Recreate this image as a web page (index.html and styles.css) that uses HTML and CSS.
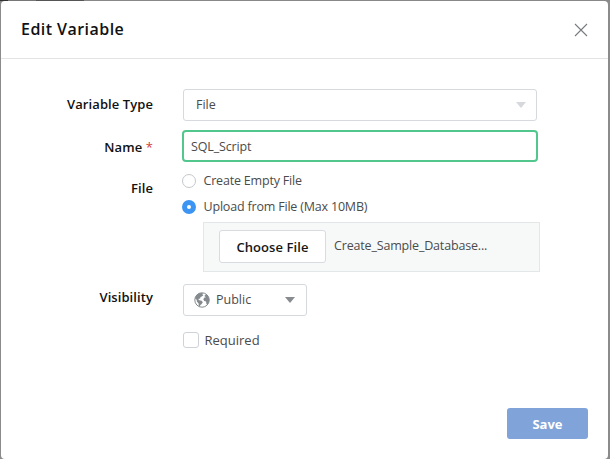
FILE: index.html
```html
<!DOCTYPE html>
<html lang="en">
<head>
<meta charset="utf-8">
<title>Edit Variable</title>
<link rel="stylesheet" href="styles.css">
</head>
<body>
<main class="dialog">
  <header class="dialog-header">
    <h1>Edit Variable</h1>
    <svg class="close" viewBox="0 0 14 14"><path d="M1 1 13 13M13 1 1 13"/></svg>
  </header>
  <form class="form">
    <div class="row row-type">
      <div class="label">Variable Type</div>
      <div class="select"><span>File</span><svg class="caret pale" viewBox="0 0 10 6"><path d="M0 0H10L5 6Z"/></svg></div>
    </div>
    <div class="row row-name">
      <div class="label">Name <b class="star">*</b></div>
      <div class="input"><span>SQL_Script</span></div>
    </div>
    <div class="row row-file">
      <div class="label">File</div>
      <div class="file">
        <div class="option"><i class="radio"></i><span class="create">Create Empty File</span></div>
        <div class="option"><i class="radio checked"></i><span class="upload">Upload from File (Max 10MB)</span></div>
        <div class="picker"><div class="choose"><span>Choose File</span></div><span class="filename">Create_Sample_Database...</span></div>
      </div>
    </div>
    <div class="row row-visibility">
      <div class="label">Visibility</div>
      <div class="select small">
        <svg class="globe" viewBox="0 0 16 16"><circle cx="8" cy="8" r="7.2"/><path d="M1 6.2 2.3 3.3 5 1.2 9 .9 8.3 2.3 9.4 3.2 7.8 4.5 6.5 5.1 6.2 6.5 4.2 7.1 5.3 8.2 7.7 8.7 8.8 10.2 7.7 12 6.4 13.1 5.7 14.8 4.8 14.3 4.6 11.4 3 9.8 2.6 7.8ZM10.3 4.1 12 2.3 14.2 4.2 15.3 7.3 15 10 13.4 12.8 12.4 12.1 12.1 9.5 10.2 9.1 9.3 7.3 10.4 5.5 12 5.2Z"/></svg>
        <span>Public</span><svg class="caret" viewBox="0 0 10 6"><path d="M0 0H10L5 6Z"/></svg>
      </div>
    </div>
    <div class="required"><i class="checkbox"></i><span>Required</span></div>
  </form>
  <footer><div class="save"><span>Save</span></div></footer>
</main>
</body>
</html>
```
FILE: styles.css
```css
* { box-sizing: border-box; }
body {
  margin: 0;
  padding: 1px 2px 0 1px;
  height: 459px;
  overflow: hidden;
  background: linear-gradient(90deg, #333 0 8px, #777 8px 36px, #555 36px 84px, #888 84px) top / 100% 1px no-repeat, #8b8b8b;
  font: 12.5px/18px "Open Sans", sans-serif;
  color: #4b4b4b;
}
.dialog { height: 458px; background: #fff; border-radius: 4px; display: flex; flex-direction: column; }
.dialog-header {
  height: 58px;
  padding: 0 20px 0 20px;
  display: flex;
  align-items: center;
  justify-content: space-between;
  border-bottom: 1px solid #e4e4e4;
}
h1 { margin: -1px 0 0; font-size: 16px; font-weight: 600; letter-spacing: 0.45px; color: #111; }
.close { width: 14px; height: 14px; margin-top: 1px; fill: none; stroke: #777b7e; stroke-width: 1.1; }
.form { padding: 30px 0 0; }
.row { display: grid; grid-template-columns: 152px 1fr; column-gap: 30px; align-items: start; }
.label { text-align: right; font-size: 13px; font-weight: 600; letter-spacing: 0.08px; color: #111; white-space: nowrap; }
.star { color: #d0403c; font-weight: 400; }
.select {
  width: 354px;
  height: 32px;
  border: 1px solid #d6d9dd;
  border-radius: 3px;
  display: flex;
  align-items: center;
  justify-content: space-between;
  padding: 0 10px 0 12px;
}
.caret { width: 10px; height: 6px; fill: #888c90; }
.caret.pale { fill: #d6d8db; }
.row-type .label { padding-top: 6px; }
.row-name { margin-top: 9px; }
.row-name .label { padding-top: 8px; }
.input {
  width: 356px;
  height: 32px;
  margin-left: -1px;
  padding: 0 7px;
  border: 2px solid #52c78d;
  border-radius: 4px;
  display: flex;
  align-items: center;
  letter-spacing: -0.15px;
}
.input span { margin-top: 1px; }
.row-file { margin-top: 12px; }
.row-file .label { padding-top: 5px; }
.option { display: flex; align-items: center; gap: 7.5px; height: 14px; margin: 0 0 12px -1px; letter-spacing: -0.19px; }
.radio { width: 14px; height: 14px; border: 1px solid #c5c8cb; border-radius: 50%; background: #fff; }
.radio.checked { border: 5px solid #3c95f2; }
.picker {
  width: 337px;
  height: 50px;
  margin: -4px 0 0 20px;
  padding-left: 15px;
  display: flex;
  align-items: center;
  gap: 8px;
  background: #f7f9f9;
  border: 1px solid #e4e7e7;
}
.choose {
  width: 107px;
  height: 33px;
  margin-top: -1px;
  display: flex;
  align-items: center;
  justify-content: center;
  background: #fff;
  border: 1px solid #d8dbe0;
  border-radius: 3px;
  font-size: 13px;
  font-weight: 600;
  letter-spacing: 0.08px;
  color: #161616;
}
.choose span { margin-top: 1px; }
.filename { margin-top: -3px; letter-spacing: -0.17px; }
.row-visibility { margin-top: 12px; }
.row-visibility .label { padding-top: 4px; letter-spacing: 0.08px; }
.small { width: 124px; justify-content: flex-start; padding-left: 10px; }
.small .caret { margin: 0 1px 0 auto; }
.globe { width: 16px; height: 16px; margin-right: 6px; fill: #858a8e; }
.globe circle { fill: none; stroke: #858a8e; }
.required { display: flex; align-items: center; gap: 6px; margin: 15px 0 0 182px; font-size: 13px; height: 18px; }
.checkbox { width: 16px; height: 16px; border: 1px solid #cfd3d8; border-radius: 3px; }
.required span { margin: -1px 0 0 -0.5px; }
footer { margin-top: auto; padding: 0 20px 20px 0; display: flex; justify-content: flex-end; }
.save {
  width: 81px;
  height: 31px;
  display: flex;
  align-items: center;
  justify-content: center;
  background: #80a4d9;
  border-radius: 3px;
  color: #fff;
  font-size: 13px;
  font-weight: 700;
}
```
